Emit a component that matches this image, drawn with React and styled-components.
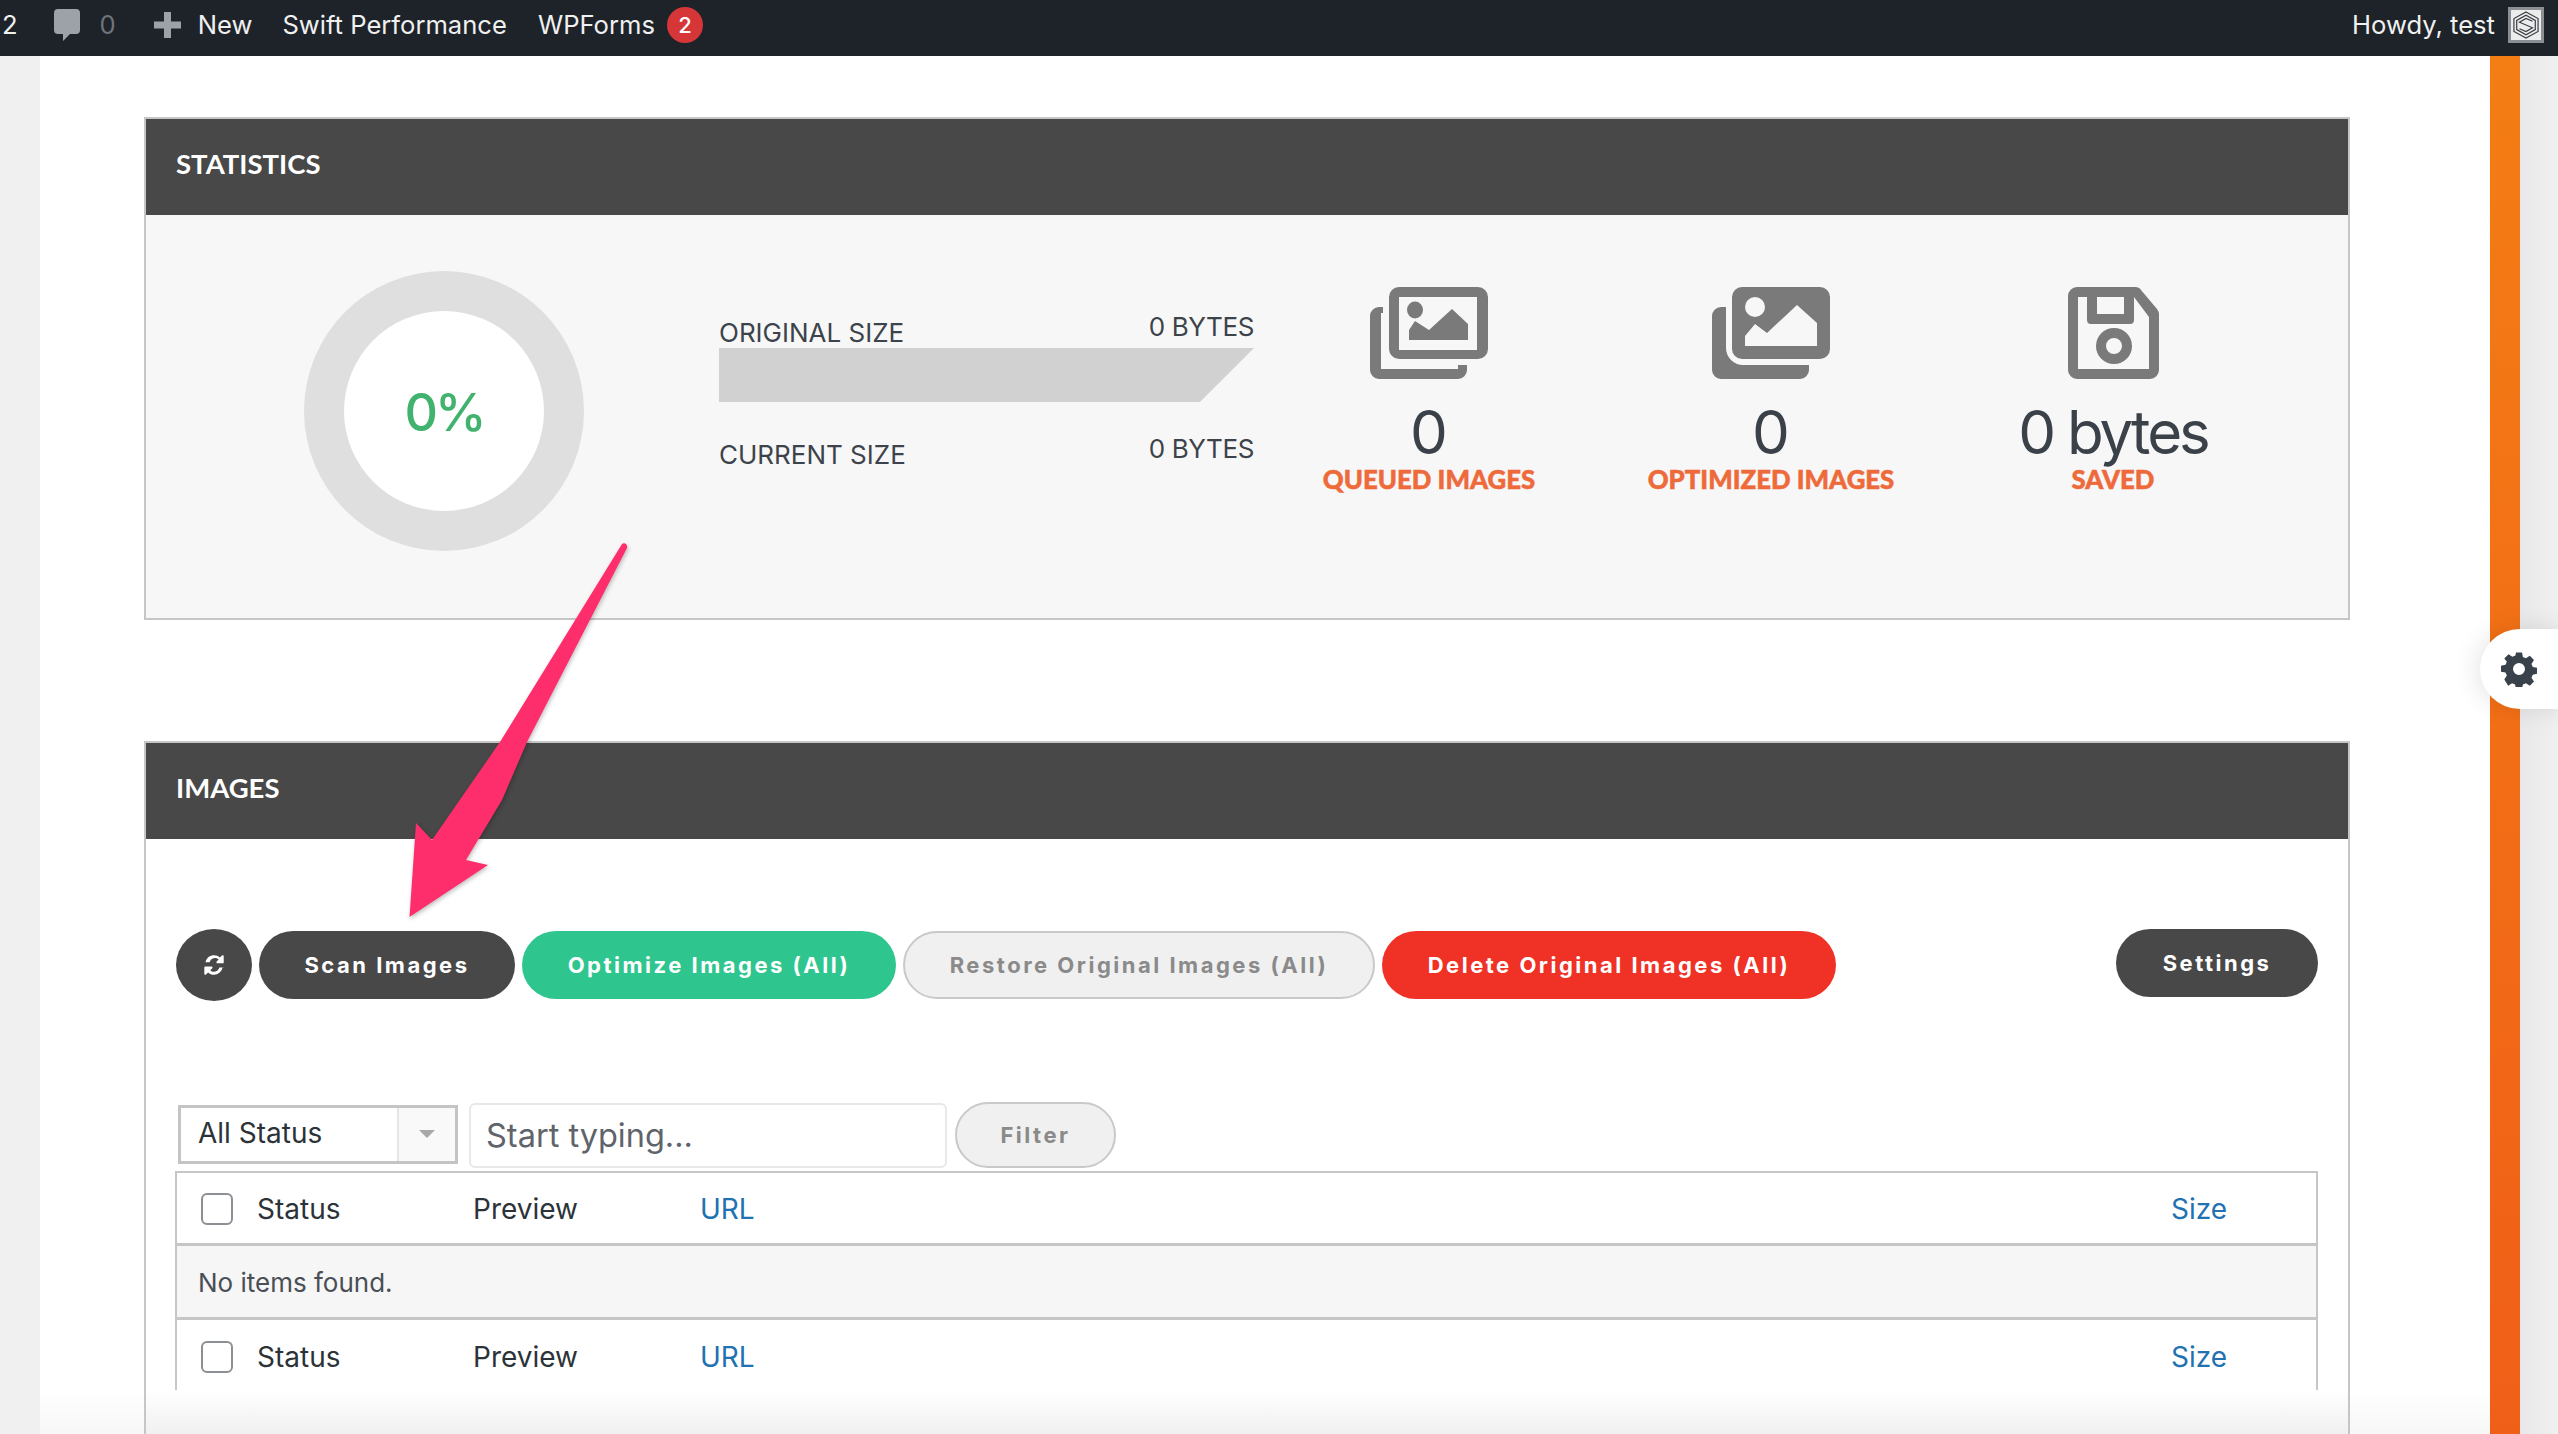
import React from "react";
import styled, { createGlobalStyle } from "styled-components";

const Global = createGlobalStyle`
  html, body { margin: 0; padding: 0; background: #fff; }
  * { box-sizing: border-box; }
  body { font-family: Inter, "Liberation Sans", sans-serif; -webkit-font-smoothing: antialiased; }
`;

const Page = styled.div`
  position: relative; width: 2558px; height: 1434px; overflow: hidden;
  display: flex; flex-direction: column; background: #fff;
`;
const AdminBar = styled.header`
  flex: 0 0 56px; display: flex; align-items: center; justify-content: space-between;
  background: #1e2329; color: #f0f0f1; font-size: 25.6px; padding: 0 14px 7px 2px;
`;
const BarGroup = styled.div`display: flex; align-items: center;`;
const BarText = styled.span`
  margin-left: ${p => p.$ml || 0}px; color: ${p => p.$muted ? "#6f747a" : "#f0f0f1"}; white-space: nowrap;
`;
const Badge = styled.span`
  width: 36px; height: 36px; border-radius: 50%; background: #d63638; color: #fff; font-size: 22px; font-weight: 500;
  display: flex; align-items: center; justify-content: center; margin-left: 12px;
`;
const BarIcon = styled.svg`margin-left: ${p => p.$ml}px; display: block; fill: #9ca2a8;`;
const Avatar = styled.div`
  width: 36px; height: 36px; margin-left: 13px; background: #ececec; border: 3px solid #8b8f94;
  display: flex; align-items: center; justify-content: center;
`;
const Body = styled.div`flex: 1; display: flex; min-height: 0;`;
const Gutter = styled.div`flex: 0 0 40px; background: #f0f0f0;`;
const Main = styled.main`
  flex: 0 0 2450px; padding: 61px 140px 0 104px; display: flex; flex-direction: column; gap: 121px;
  background: linear-gradient(180deg, #fff calc(100% - 44px), #f7f7f7);
`;
const Stripe = styled.div`flex: 0 0 30px; background: linear-gradient(180deg, #f47d14, #f05f18);`;
const RightEdge = styled.div`flex: 1; background: linear-gradient(90deg, #e8e8ea, #f0f0f0);`;
const Panel = styled.section`
  position: relative; border: 2px solid #c6c6c6; background: ${p => p.$bg || "#fff"}; display: flex; flex-direction: column;
  flex: ${p => p.$grow ? 1 : "0 0 auto"}; min-height: 0; overflow: hidden;
  ${p => p.$grow ? "border-bottom: none;" : ""}
`;
const PanelHead = styled.h2`
  margin: 0; height: 96px; flex: none; background: #484848; color: #fff; display: flex; align-items: center;
  padding: 0 30px 6px; font: 700 27.5px/1 Lato, sans-serif;
`;
const StatsBody = styled.div`height: 403px; padding: 56px 0 0 158px; display: flex; align-items: flex-start;`;
const Ring = styled.div`
  flex: none; width: 280px; height: 280px; border-radius: 50%; background: #dfdfdf; display: flex; align-items: center; justify-content: center;
`;
const RingInner = styled.div`
  width: 200px; height: 200px; border-radius: 50%; background: #fff; color: #41b36e; font-size: 52px; font-weight: 500;
  display: flex; align-items: center; justify-content: center; letter-spacing: -3px; padding-top: 3px;
`;
const Sizes = styled.div`flex: none; width: 535px; margin: 41px 0 0 135px; color: #3c434a; font-size: 26px;`;
const SizeRow = styled.div`
  display: flex; justify-content: space-between; align-items: flex-start; height: 36px; line-height: 30px;
  margin-top: ${p => p.$mt || 0}px;
`;
const SizeLabel = styled.span`padding-top: 6px;`;
const SizeValue = styled.span`letter-spacing: -0.4px;`;
const Bar = styled.div`height: 54px; background: #d1d1d1; clip-path: polygon(0 0, 100% 0, 89.9% 100%, 0 100%);`;
const Tiles = styled.div`flex: none; display: grid; grid-template-columns: repeat(3, 342px); margin-left: 4px;`;
const Tile = styled.div`display: flex; flex-direction: column; align-items: center; padding-top: 16px;`;
const TileNum = styled.div`font-size: 60px; line-height: 60px; margin-top: 23px; color: #3a4149; white-space: nowrap; letter-spacing: ${p => p.$tight ? "-3px" : "0"};`;
const TileLabel = styled.div`
  font: 900 25.8px/24px Lato, sans-serif; color: #ee6a3a; margin-top: 5px; white-space: nowrap;
  -webkit-text-stroke: 0.5px #ee6a3a;
`;
const ImagesBody = styled.div`flex: 1; padding: 90px 30px 0 30px; display: flex; flex-direction: column; min-height: 0;`;
const Actions = styled.div`display: flex; align-items: center; gap: 7px; height: 72px;`;
const Pill = styled.button`
  height: ${p => p.$h || 68}px; width: ${p => p.$w}px; border-radius: 34px; flex: none;
  background: ${p => p.$bg}; color: ${p => p.$fg || "#fff"}; border: ${p => p.$line ? "2px solid #c9c9c9" : "none"};
  font: 700 22px/1 Inter, sans-serif; letter-spacing: 2.5px; padding: 0; display: flex; align-items: center; justify-content: center;
  margin-left: ${p => p.$auto ? "auto" : "0"}; margin-top: ${p => p.$mt || 0}px;
`;
const RoundButton = styled(Pill)`border-radius: 50%; height: 72px;`;
const FilterRow = styled.div`display: flex; align-items: center; margin-top: 101px; height: 66px; gap: 8px;`;
const SelectBox = styled.div`
  width: 280px; height: 59px; border: 3px solid #c4c4c4; display: flex; margin: -2px 3px 0 2px; background: #fff;
`;
const SelectText = styled.div`flex: 1; padding-left: 17px; font-size: 28px; color: #2c3338; line-height: 50px;`;
const SelectArrow = styled.div`
  width: 58px; background: #f9f9f9; border-left: 2px solid #e4e4e4; display: flex; align-items: center; justify-content: center;
`;
const Caret = styled.i`display: block; width: 0; height: 0; border: 8px solid transparent; border-top: 8px solid #a8a8a8; border-bottom: 0;`;
const SearchInput = styled.input`
  width: 478px; height: 65px; border: 2px solid #e8e8e8; border-radius: 6px; padding: 0 15px; font: 400 32.5px Inter, sans-serif; color: #5f646b; background: #fff;
  &::placeholder { color: #5f646b; opacity: 1; }
`;
const Table = styled.div`
  margin-top: 3px; margin-left: -1px; border: 2px solid #c6c6c6; border-bottom: none; flex: 1; min-height: 0; display: flex; flex-direction: column;
`;
const Row = styled.div`
  display: grid; grid-template-columns: 56px 216px 227px 1fr 145px; align-items: center; height: ${p => p.$h}px; flex: none;
  padding: ${p => p.$pt || 0}px 0 0 24px; font-size: 28px; color: #2c3338; background: ${p => p.$bg || "transparent"};
  border-bottom: ${p => p.$line ? "3px solid #c6c6c6" : "none"};
`;
const EmptyRow = styled(Row)`display: flex; padding-left: 21px; font-size: 26px; color: #4a4f55;`;
const Check = styled.span`width: 32px; height: 32px; border: 2px solid #8c8f94; border-radius: 6px; background: #fff; display: block;`;
const SortLink = styled.a`color: #2271b1; text-decoration: none;`;
const BottomFade = styled.div`
  position: absolute; left: 0; right: 0; bottom: 0; height: 44px; pointer-events: none;
  background: linear-gradient(180deg, #fff, #f0f0f0);
`;
const GearTab = styled.div`
  position: absolute; left: 2480px; top: 629px; width: 90px; height: 80px; border-radius: 40px 0 0 40px; background: #fff;
  display: flex; align-items: center; padding-left: 21px; box-shadow: -4px 0 24px rgba(0,0,0,.10);
`;
const Arrow = styled.svg`
  position: absolute; left: 380px; top: 530px; overflow: visible; pointer-events: none;
  filter: drop-shadow(1px 2px 2px rgba(0,0,0,.25));
`;

function Gallery({ filled }) {
  if (filled) return (
    <svg width="118" height="92" viewBox="0 0 118 92">
      <rect x="20" y="0" width="98" height="72" rx="10" fill="#7a7a7a" />
      <path fill="#7a7a7a" d="M0 29a9 9 0 0 1 9-9h5v41a17 17 0 0 0 17 17h66v5a9 9 0 0 1-9 9H9a9 9 0 0 1-9-9z" />
      <ellipse cx="43" cy="20" rx="10" ry="10" fill="#f7f7f7" />
      <path fill="#f7f7f7" d="M33 59V49L43 37L55 46L85 18L105 36V59z" />
    </svg>
  );
  return (
    <svg width="118" height="92" viewBox="0 0 118 92">
      <path fill="#7a7a7a" fillRule="evenodd" d="M29 0h79a10 10 0 0 1 10 10v52a10 10 0 0 1-10 10H29a10 10 0 0 1-10-10V10A10 10 0 0 1 29 0zm0 10v53h78V10z" />
      <path fill="#7a7a7a" d="M0 29a9 9 0 0 1 9-9h4v6h-2v56h77v-4h9v5a9 9 0 0 1-9 9H9a9 9 0 0 1-9-9z" />
      <ellipse cx="45" cy="23" rx="8" ry="8.5" fill="#7a7a7a" />
      <path fill="#7a7a7a" d="M39 53V43L45 34L59 43L82 22L98 37V53z" />
    </svg>
  );
}

const Floppy = () => (
  <svg width="91" height="92" viewBox="0 0 91 92">
    <path fill="#7a7a7a" fillRule="evenodd" d="M9 0h58c3 0 5 1 6 3l16 19c1 2 2 3 2 5v56a9 9 0 0 1-9 9H9a9 9 0 0 1-9-9V9a9 9 0 0 1 9-9zm1 10v72h71V30L66 10v23a4 4 0 0 1-4 4H23a4 4 0 0 1-4-4V10zm19 0v17h27V10z" />
    <path fill="#7a7a7a" fillRule="evenodd" d="M46 41a18 18 0 1 1 0 36 18 18 0 0 1 0-36zm0 10a8 8 0 1 0 0 16 8 8 0 0 0 0-16z" />
  </svg>
);

const Refresh = () => (
  <svg width="24" height="24" viewBox="0 0 24 24" fill="#fff">
    <path d="M20.6 14.5C19.4 18.9 16 21.7 12 21.7c-2.2 0-4.3-.8-5.9-2.3L4 21.5a1 1 0 0 1-1.7-.7v-6.3a1 1 0 0 1 1-1h6.3a1 1 0 0 1 .7 1.7l-2 2c1 1 2.3 1.5 3.7 1.5 1.9 0 3.7-1 4.7-2.7.2-.5.5-1 .7-1.5h3.900c.1 0 .2.1.1.5zM21.700 10.300h-6.300a1 1 0 0 1-.7-1.700l2-2C15.700 5.600 14.400 5.100 13 5.100c-1.900 0-3.700 1-4.700 2.700-.2.5-.5 1-.7 1.500H3.700c-.1 0-.2-.1-.1-.5C4.800 4.400 8.200 2.300 12 2.300c2.200 0 4.300.8 5.900 2.300L20 2.500a1 1 0 0 1 1.700.7v6.100a1 1 0 0 1 0 .7z" />
  </svg>
);

const Gear = () => (
  <svg width="36" height="36" viewBox="0 0 24 24" fill="#39414a">
    <path fillRule="evenodd" d="M10 1h4l.6 3 2 .9 2.600-1.700 2.800 2.800-1.700 2.600.9 2 3 .6v4l-3 .6-.9 2 1.700 2.600-2.800 2.800-2.600-1.700-2 .9-.6 3h-4l-.6-3-2-.9-2.600 1.700L2.200 19l1.700-2.600-.9-2-3-.6v-4l3-.6.9-2L2.200 5l2.800-2.800 2.600 1.700 2-.9zM12 8a4 4 0 1 0 0 8 4 4 0 0 0 0-8z" />
  </svg>
);

export default function App() {
  return (
    <Page>
      <Global />
      <AdminBar>
        <BarGroup>
          <BarText>2</BarText>
          <BarIcon $ml={36} width="26" height="32" viewBox="0 0 26 32">
            <path d="M4 0h18a4 4 0 0 1 4 4v17a4 4 0 0 1-4 4H16l-7 7v-7H4a4 4 0 0 1-4-4V4a4 4 0 0 1 4-4z" />
          </BarIcon>
          <BarText $muted $ml={20}>0</BarText>
          <BarIcon $ml={38} width="27" height="26" viewBox="0 0 27 26">
            <path d="M10 0h7v9.500h10v7H17V26h-7v-9.500H0v-7h10z" />
          </BarIcon>
          <BarText $ml={17}>New</BarText>
          <BarText $ml={30}>Swift Performance</BarText>
          <BarText $ml={31}>WPForms</BarText>
          <Badge>2</Badge>
        </BarGroup>
        <BarGroup>
          <BarText>Howdy, test</BarText>
          <Avatar>
            <svg width="26" height="28" viewBox="0 0 28 30" fill="none" stroke="#3a3f45" strokeWidth="1.3">
              <path d="M14 1l13 7v14l-13 7L1 22V8z" />
              <path d="M14 4.500l10 5.500v10l-10 5.500L4 20V10z" />
              <path d="M21 11l-7-3-7 4 14 6-7 4-7-3" />
            </svg>
          </Avatar>
        </BarGroup>
      </AdminBar>
      <Body>
        <Gutter />
        <Main>
          <Panel $bg="#f7f7f7">
            <PanelHead>STATISTICS</PanelHead>
            <StatsBody>
              <Ring><RingInner>0%</RingInner></Ring>
              <Sizes>
                <SizeRow><SizeLabel>ORIGINAL SIZE</SizeLabel><SizeValue>0 BYTES</SizeValue></SizeRow>
                <Bar />
                <SizeRow $mt={32}><SizeLabel>CURRENT SIZE</SizeLabel><SizeValue>0 BYTES</SizeValue></SizeRow>
              </Sizes>
              <Tiles>
                <Tile><Gallery /><TileNum>0</TileNum><TileLabel>QUEUED IMAGES</TileLabel></Tile>
                <Tile><Gallery filled /><TileNum>0</TileNum><TileLabel>OPTIMIZED IMAGES</TileLabel></Tile>
                <Tile><Floppy /><TileNum $tight>0 bytes</TileNum><TileLabel>SAVED</TileLabel></Tile>
              </Tiles>
            </StatsBody>
          </Panel>
          <Panel $grow>
            <PanelHead>IMAGES</PanelHead>
            <ImagesBody>
              <Actions>
                <RoundButton $w={76} $bg="#484848"><Refresh /></RoundButton>
                <Pill $w={256} $bg="#484848">Scan Images</Pill>
                <Pill $w={374} $bg="#2ec58f">Optimize Images (All)</Pill>
                <Pill $w={472} $bg="#f0f0f0" $fg="#8a8a8a" $line>Restore Original Images (All)</Pill>
                <Pill $w={454} $bg="#ef3126">Delete Original Images (All)</Pill>
                <Pill $w={202} $bg="#484848" $auto $mt={-5}>Settings</Pill>
              </Actions>
              <FilterRow>
                <SelectBox>
                  <SelectText>All Status</SelectText>
                  <SelectArrow><Caret /></SelectArrow>
                </SelectBox>
                <SearchInput placeholder="Start typing..." readOnly />
                <Pill $w={161} $h={66} $bg="#f0f0f0" $fg="#8a8a8a" $line>Filter</Pill>
              </FilterRow>
              <Table>
                <Row $h={73} $pt={2} $line>
                  <Check /><span>Status</span><span>Preview</span><SortLink>URL</SortLink><SortLink>Size</SortLink>
                </Row>
                <EmptyRow $h={74} $pt={2} $line $bg="#f6f6f6">No items found.</EmptyRow>
                <Row $h={73}>
                  <Check /><span>Status</span><span>Preview</span><SortLink>URL</SortLink><SortLink>Size</SortLink>
                </Row>
              </Table>
            </ImagesBody>
            <BottomFade />
          </Panel>
        </Main>
        <Stripe />
        <RightEdge />
      </Body>
      <GearTab><Gear /></GearTab>
      <Arrow width="250" height="400" viewBox="0 0 250 400">
        <path fill="#fe2e6c" d="M242 14c3-2 6 1 5 4L147 212 122 270 86 330 108 335 29.500 387 36 293 52 310 120 212z" />
      </Arrow>
    </Page>
  );
}
